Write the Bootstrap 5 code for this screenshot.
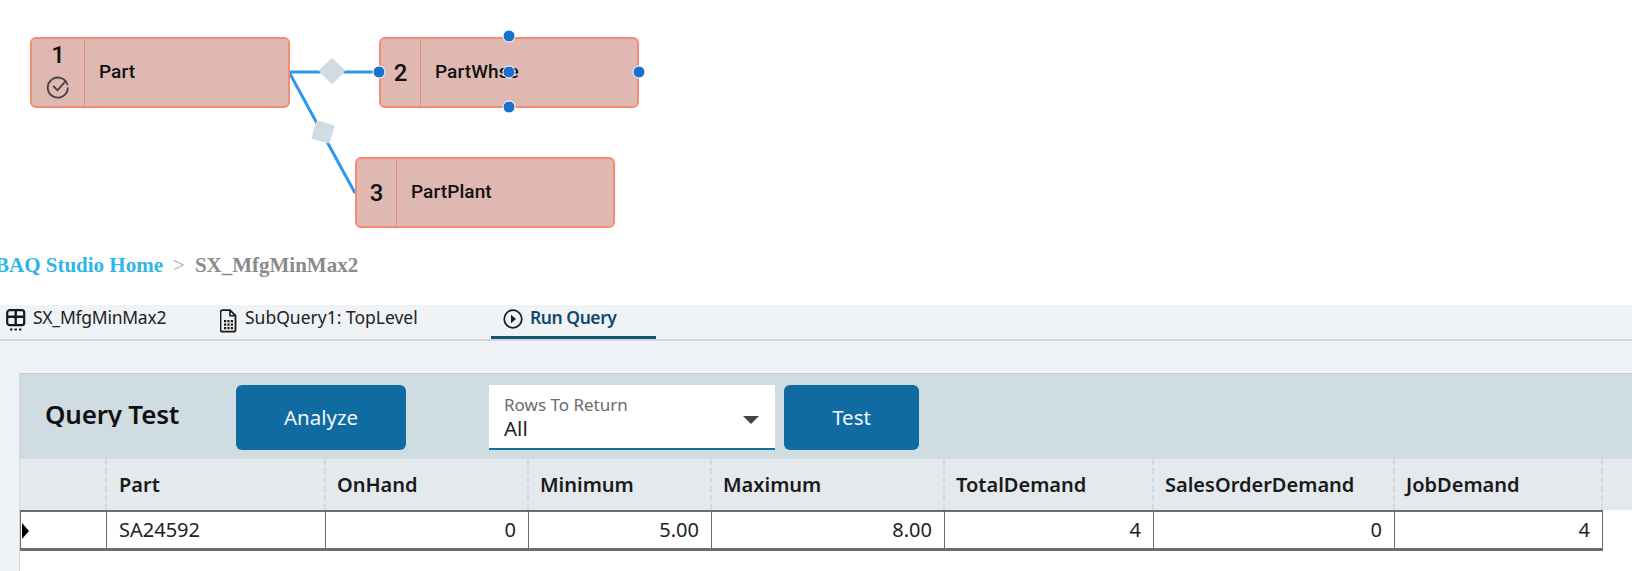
<!DOCTYPE html>
<html lang="en">
<head>
<meta charset="utf-8">
<title>BAQ Studio</title>
<link rel="stylesheet" href="https://cdn.jsdelivr.net/npm/bootstrap@5.3.0/dist/css/bootstrap.min.css">
<style>
html,body{height:571px;overflow:hidden;background:#fff}
body{font-family:"Noto Sans",sans-serif;color:#1c1c1c}
.canvas{position:relative;height:249px}
.canvas svg.wires{position:absolute;left:0;top:0;width:100%;height:100%}
.qnode{position:absolute;width:260px;height:71px;background:#e0b8b2;border:2.5px solid #f58a76;border-radius:6px;font-family:Roboto,sans-serif;color:#111}
.qnum{flex:0 0 auto;border-right:1px solid #f58a76;font-size:24px;font-weight:500;line-height:1}
.qname{font-size:19px;font-weight:500;padding-left:14px;letter-spacing:.1px}
.n1{left:30px;top:37px}.n2{left:379px;top:37px}.n3{left:355px;top:157px}
.n1 .qnum{width:53px}.n2 .qnum{width:40px}.n3 .qnum{width:40px}
.handle{position:absolute;width:13px;height:13px;border-radius:50%;background:#1a70cf;border:1px solid #fff;transform:translate(-50%,-50%)}
.diamond{position:absolute;width:19px;height:19px;background:#d0dce1;border-radius:2px;transform:translate(-50%,-50%) rotate(45deg)}
.diamond.tilt{transform:translate(-50%,-50%) rotate(17deg)}
.crumbs{height:56px;padding-top:5px;margin-left:-5px;font-family:"Liberation Serif",serif;font-weight:700;font-size:21px;line-height:22px;color:#8a8a8a}
.crumbs .home{color:#2fb6e6}
.crumbs .sep{font-weight:400;color:#aaa;margin:0 10px}
.tabsbar{height:36px;background:#f0f3f6;border-bottom:2px solid #d2d6d9;font-size:17.5px;color:#222}
.tabitem{height:34px;display:flex;align-items:flex-start;line-height:24px;gap:7px}
.t1{width:220px;padding-left:6px;letter-spacing:-.25px}.t2{width:271px;gap:8px}
.t3{width:165px;padding-left:12px;font-weight:600;color:#12496b;border-bottom:3px solid #1a5276;letter-spacing:-.45px}
.workarea{background:#f0f3f6;padding:32px 0 0 19px;height:231px}
.tpanel{background:#fff;height:100%;border-left:1px solid #d4d9dc}
.phead{height:86px;background:#cfdce2;border-top:1px solid #c5ced3;padding-top:11px;display:flex;align-items:flex-start}
.ptitle{width:216px;padding-left:25px;font-size:26px;font-weight:600;line-height:58px;height:42px;overflow:hidden;color:#111;letter-spacing:-.2px}
.actbtn{height:65px;border-radius:6px;background:#0f6ba2;border:0;color:#f2f7fa;font-size:20.5px;padding:0}
.actbtn:hover{background:#0f6ba2;color:#f2f7fa}
.b1{width:170px;margin-right:83px}.b2{width:135px}
.rowsel{width:286px;height:65px;margin-right:9px;background:#fff;border-bottom:2px solid #1a6f9f;padding:9px 15px 0;position:relative;line-height:1}
.rowsel small{display:block;font-size:17px;line-height:21px;color:#6a6a6a}
.rowsel span{display:block;font-size:20.5px;line-height:27px;color:#222}
.caret{position:absolute;right:16px;top:31px;width:0;height:0;border-left:8px solid transparent;border-right:8px solid transparent;border-top:8px solid #444}
.grid{table-layout:fixed;width:1612px;margin:0;border-collapse:separate;border-spacing:0;--bs-table-bg:transparent}
.grid th{height:51px;background:#e3e9ed;border:0;border-right:2px dashed #d3d9dc;padding:0 0 0 11px;font-size:20px;font-weight:600;vertical-align:middle;color:#1a1a1a;box-shadow:none}
.grid th:nth-child(2){padding-left:12px}
.grid td{height:41px;background:#fff;border:0;border-top:2px solid #6d6d6d;border-bottom:3px solid #6d6d6d;border-right:1px solid #6d6d6d;padding:0 12px;font-size:20px;color:#222;vertical-align:middle;line-height:1}
.grid td:first-child{border-left:1px solid #6d6d6d;position:relative}
.grid td.blank{border:0;background:#fff}
.grid th.blank{border-right:0}
.arrow{position:absolute;left:1px;top:11px;width:0;height:0;border-top:8px solid transparent;border-bottom:8px solid transparent;border-left:7px solid #000}
</style>
</head>
<body>
<div class="canvas">
  <svg class="wires" viewBox="0 0 1632 249" aria-hidden="true">
    <path d="M289 72H380M289 72L355 193" fill="none" stroke="#2f97ea" stroke-width="3"/>
  </svg>
  <div class="diamond" style="left:332px;top:71px"></div>
  <div class="diamond tilt" style="left:323px;top:132px"></div>
  <div class="qnode n1 d-flex">
    <div class="qnum d-flex flex-column align-items-center pt-1">1
      <svg class="mt-2" width="24" height="24" viewBox="0 0 22 22" fill="none" stroke="#444" stroke-width="1.7" stroke-linecap="round" stroke-linejoin="round"><path d="M19.5 8.5A9.2 9.2 0 1 0 20 12"/><path d="M7 10.5l3.5 3.5L18 5.5"/></svg>
    </div>
    <div class="qname d-flex align-items-center">Part</div>
  </div>
  <div class="qnode n2 d-flex">
    <div class="qnum d-flex align-items-center justify-content-center">2</div>
    <div class="qname d-flex align-items-center">PartWhse</div>
  </div>
  <div class="qnode n3 d-flex">
    <div class="qnum d-flex align-items-center justify-content-center">3</div>
    <div class="qname d-flex align-items-center">PartPlant</div>
  </div>
  <div class="handle" style="left:509px;top:36px"></div>
  <div class="handle" style="left:379px;top:72px"></div>
  <div class="handle" style="left:509px;top:72px"></div>
  <div class="handle" style="left:639px;top:72px"></div>
  <div class="handle" style="left:509px;top:107px"></div>
</div>
<div class="crumbs d-flex"><span class="home">BAQ Studio Home</span><span class="sep">&gt;</span><span>SX_MfgMinMax2</span></div>
<div class="tabsbar d-flex">
  <div class="tabitem t1">
    <svg class="mt-1" width="20" height="24" viewBox="0 0 20 24"><rect x="1.2" y="1.2" width="17" height="15" rx="2.5" fill="none" stroke="#1a1a1a" stroke-width="2.2"/><path d="M1 7.800h18M9.700 1v15" stroke="#1a1a1a" stroke-width="2.400"/><path d="M4 20.500h2.400M8.500 20.500h2.400M13 20.500h2.400" stroke="#1a1a1a" stroke-width="2"/></svg>
    <span>SX_MfgMinMax2</span>
  </div>
  <div class="tabitem t2">
    <svg class="mt-1" width="17" height="24" viewBox="0 0 17 24"><path d="M2.500 1.200h7.500l5.500 5.500v14a2 2 0 0 1-2 2h-11a2 2 0 0 1-2-2v-17.500a2 2 0 0 1 2-2z" fill="none" stroke="#1a1a1a" stroke-width="1.800"/><path d="M10 1.500v5.200h5.200" fill="none" stroke="#1a1a1a" stroke-width="1.600"/><path d="M4 11h2.200v2.200H4zM7.400 11h2.200v2.200H7.400zM10.800 11H13v2.200h-2.200zM4 14.500h2.200v2.200H4zM7.400 14.500h2.200v2.200H7.400zM10.800 14.500H13v2.200h-2.200zM4 18h2.200v2.200H4zM7.400 18h2.200v2.200H7.400zM10.800 18H13v2.200h-2.200z" fill="#1a1a1a"/></svg>
    <span>SubQuery1: TopLevel</span>
  </div>
  <div class="tabitem t3">
    <svg class="mt-1" width="20" height="20" viewBox="0 0 20 20"><circle cx="10" cy="10" r="8.800" fill="none" stroke="#1a1a1a" stroke-width="1.700"/><path d="M8 5.800l5 4.200-5 4.200z" fill="#1a1a1a"/></svg>
    <span>Run Query</span>
  </div>
</div>
<div class="workarea">
  <div class="tpanel">
    <div class="phead">
      <div class="ptitle">Query Test</div>
      <button type="button" class="btn actbtn b1">Analyze</button>
      <div class="rowsel"><small>Rows To Return</small><span>All</span><i class="caret"></i></div>
      <button type="button" class="btn actbtn b2">Test</button>
    </div>
    <table class="table grid">
      <colgroup><col style="width:87px"><col style="width:219px"><col style="width:203px"><col style="width:183px"><col style="width:233px"><col style="width:209px"><col style="width:241px"><col style="width:208px"><col></colgroup>
      <thead><tr><th></th><th>Part</th><th>OnHand</th><th>Minimum</th><th>Maximum</th><th>TotalDemand</th><th>SalesOrderDemand</th><th>JobDemand</th><th class="blank"></th></tr></thead>
      <tbody><tr><td><i class="arrow"></i></td><td>SA24592</td><td class="text-end">0</td><td class="text-end">5.00</td><td class="text-end">8.00</td><td class="text-end">4</td><td class="text-end">0</td><td class="text-end">4</td><td class="blank"></td></tr></tbody>
    </table>
  </div>
</div>
<script src="https://cdn.jsdelivr.net/npm/bootstrap@5.3.0/dist/js/bootstrap.bundle.min.js"></script>
</body>
</html>
